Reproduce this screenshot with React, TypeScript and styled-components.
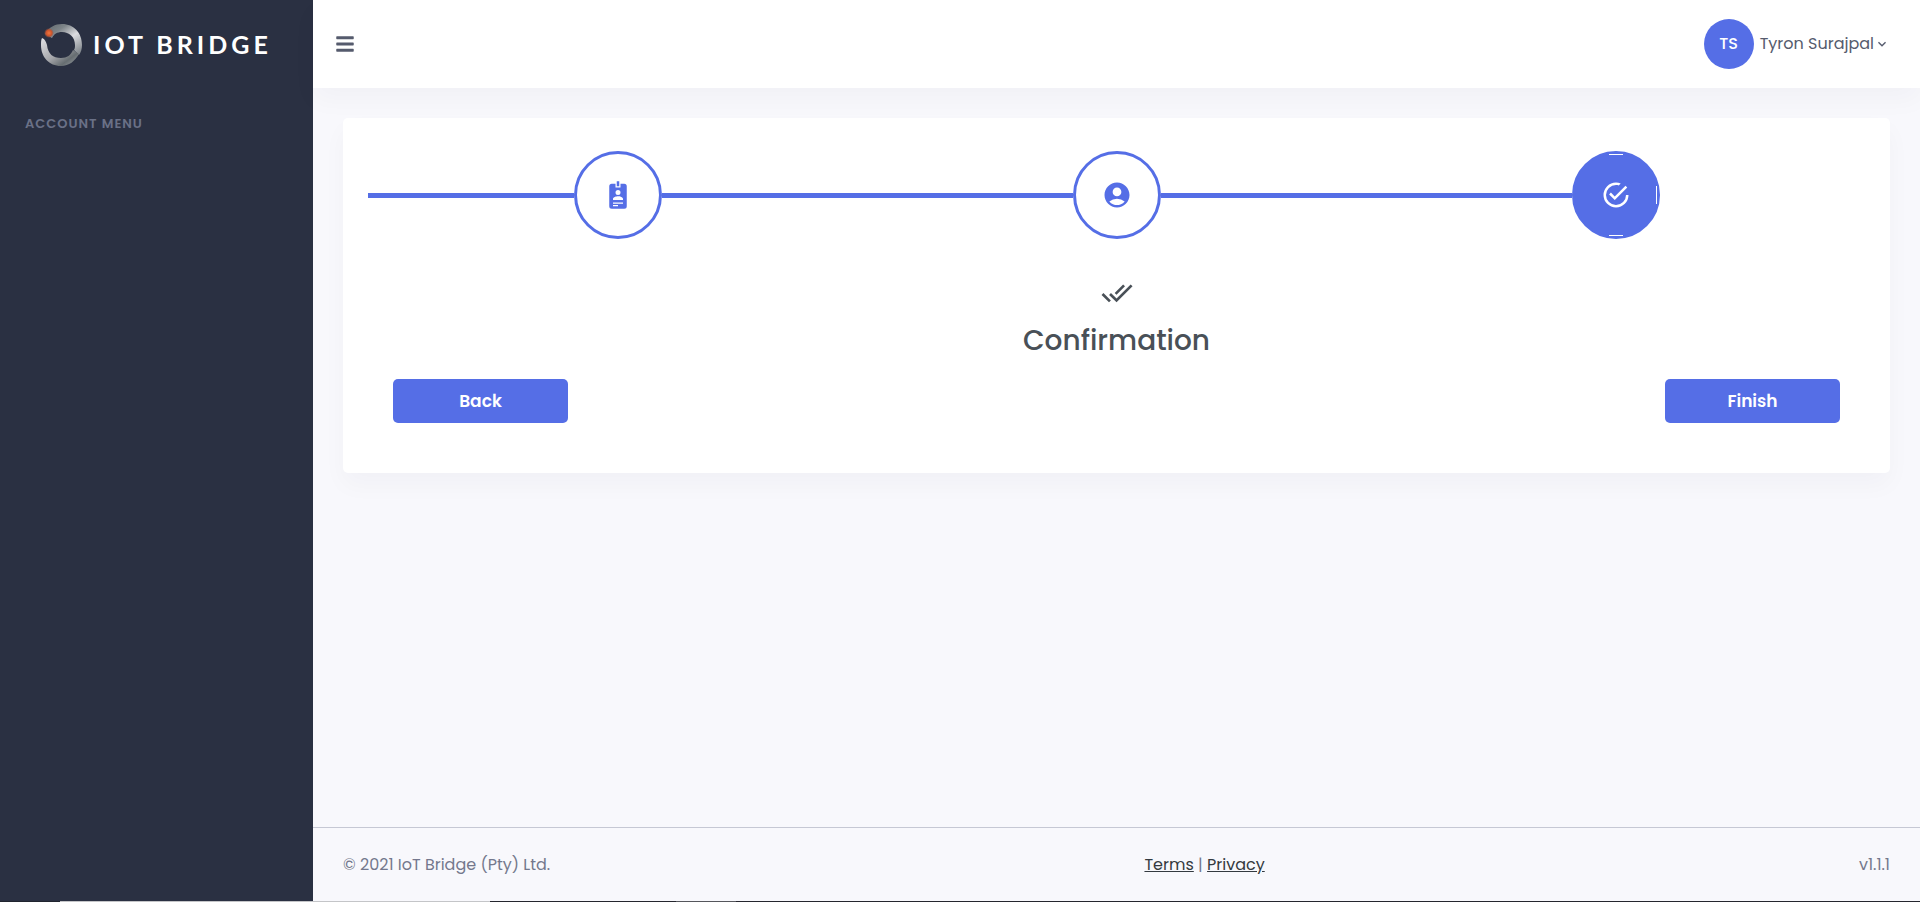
import React from "react";
import styled, { createGlobalStyle } from "styled-components";
import { FaBars } from "react-icons/fa";
import { MdAccountCircle, MdDoneAll, MdKeyboardArrowDown } from "react-icons/md";

const PRIMARY = "#556ee6";

const GlobalStyle = createGlobalStyle`
  *, *::before, *::after { box-sizing: border-box; }
  body {
    margin: 0;
    background: #f8f8fc;
    color: #74788d;
    font-family: Poppins, Inter, "Liberation Sans", sans-serif;
    font-size: 16px;
    line-height: 24px;
  }
  button { font: inherit; cursor: pointer; }
`;

const Page = styled.div`
  display: flex;
  flex-direction: column;
  min-height: 100vh;
`;

const Shell = styled.div`
  flex: 1;
  display: grid;
  grid-template-columns: 313px 1fr;
`;

const Sidebar = styled.aside`
  background: #2a3042;
`;

const Brand = styled.a`
  display: flex;
  align-items: center;
  gap: 9px;
  height: 88px;
  padding-left: 40px;
  color: #fff;
  font-family: Lato, sans-serif;
  font-size: 25px;
  font-weight: 700;
  letter-spacing: 4px;
  white-space: nowrap;
  text-decoration: none;
`;

const MenuTitle = styled.h2`
  margin: 24px 25px;
  color: #6a7187;
  font-size: 13px;
  font-weight: 600;
  line-height: 24px;
  letter-spacing: 1px;
`;

const Main = styled.div`
  display: flex;
  flex-direction: column;
  min-width: 0;
`;

const Topbar = styled.header`
  display: flex;
  align-items: center;
  justify-content: space-between;
  height: 88px;
  padding: 0 30px 0 22px;
  background: #fff;
  box-shadow: 0 12px 24px rgba(18, 38, 63, 0.03);
`;

const PlainButton = styled.button`
  display: flex;
  align-items: center;
  padding: 0;
  border: 0;
  background: none;
  color: #555b6d;
`;

const Avatar = styled.span`
  display: grid;
  place-items: center;
  width: 50px;
  height: 50px;
  margin-right: 6px;
  border-radius: 50%;
  background: ${PRIMARY};
  color: #fff;
  font-weight: 500;
`;

const Content = styled.main`
  flex: 1;
  padding: 30px;
`;

const Card = styled.section`
  padding: 33px 25px 50px;
  border-radius: 5px;
  background: #fff;
  box-shadow: 0 12px 24px rgba(18, 38, 63, 0.03);
`;

const Steps = styled.ol`
  display: grid;
  grid-template-columns: repeat(3, 1fr);
  margin: 0;
  padding: 0;
  list-style: none;
`;

const Step = styled.li<{ $last?: boolean }>`
  display: flex;
  align-items: center;
  &::before,
  &::after {
    content: "";
    flex: 1;
    height: 5px;
    background: ${PRIMARY};
  }
  &::after {
    visibility: ${(p) => (p.$last ? "hidden" : "visible")};
  }
`;

const StepButton = styled.button<{ $active?: boolean }>`
  display: grid;
  place-items: center;
  width: 88px;
  height: 88px;
  padding: 0;
  border: 3px solid ${PRIMARY};
  border-radius: 50%;
  background: ${(p) => (p.$active ? PRIMARY : "#fff")};
  color: ${(p) => (p.$active ? "#fff" : PRIMARY)};
`;

/* Faint highlights where the filled disc meets its ring. */
const Disc = styled.span`
  display: grid;
  place-items: center;
  width: 82px;
  height: 82px;
  background:
    linear-gradient(#fff, #fff) center top / 14px 1px no-repeat,
    linear-gradient(#fff, #fff) center bottom / 14px 1px no-repeat,
    linear-gradient(#fff, #fff) right center / 1px 18px no-repeat;
`;

const Panel = styled.div`
  display: flex;
  flex-direction: column;
  align-items: center;
  padding-top: 38px;
  color: #495057;
`;

const Title = styled.h1`
  margin: 12px 0 18px;
  font-size: 28px;
  font-weight: 500;
  line-height: 40px;
`;

const Actions = styled.div`
  display: flex;
  justify-content: space-between;
  padding: 0 25px;
`;

const ActionButton = styled.button`
  width: 175px;
  height: 44px;
  border: 0;
  border-radius: 5px;
  background: ${PRIMARY};
  color: #fff;
  font-size: 17px;
  font-weight: 600;
`;

const Footer = styled.footer`
  display: flex;
  align-items: center;
  justify-content: space-between;
  height: 74px;
  padding: 0 30px;
  border-top: 1px solid #c6c8d4;
`;

const FooterLink = styled.a`
  color: #343a40;
`;

const BottomEdge = styled.div`
  height: 1px;
  background: linear-gradient(
    to right,
    #20242f 60px,
    #c4c5c8 60px 490px,
    #25262e 490px 676px,
    #55565c 676px 736px,
    #25262e 736px
  );
`;

function Logo() {
  return (
    <svg width="44" height="46" viewBox="0 -2 44 46" aria-hidden="true">
      <defs>
        <linearGradient id="right" x1="0" y1="0" x2="0.8" y2="1">
          <stop offset="0" stopColor="#5f666b" />
          <stop offset="0.3" stopColor="#7d8488" />
          <stop offset="0.6" stopColor="#dcdce0" />
          <stop offset="1" stopColor="#858b90" />
        </linearGradient>
        <linearGradient id="left" x1="0" y1="0" x2="1" y2="1">
          <stop offset="0" stopColor="#e2e2e6" />
          <stop offset="0.5" stopColor="#a5a6aa" />
          <stop offset="0.75" stopColor="#666d71" />
          <stop offset="1" stopColor="#9fa5a8" />
        </linearGradient>
        <radialGradient id="spark">
          <stop offset="0" stopColor="#f0763f" />
          <stop offset="0.6" stopColor="#c9532c" />
          <stop offset="1" stopColor="#8b5144" stopOpacity="0" />
        </radialGradient>
      </defs>
      <path d="M5 11C9 4 15 1 22 1c12 0 20 9 20 21 0 4-1 7-3 10l-5-5c1-2 1-3 1-5 0-8-6-13-13-13-5 0-8 2-10 6z" fill="url(#right)" />
      <path d="M2 15c3 1 4 4 5 7 1 9 6 13 14 13 6 0 10-3 12-8l6 4c-4 7-10 12-18 12C9 43 1 34 1 22c0-3 0-5 1-7z" fill="url(#left)" />
      <circle cx="9" cy="10" r="5" fill="url(#spark)" />
    </svg>
  );
}

function StepIcon({ d }: { d: string }) {
  return (
    <svg width="30" height="30" viewBox="0 0 24 24" fill="currentColor" aria-hidden="true">
      <path d={d} />
    </svg>
  );
}

const BADGE =
  "M17,3H14V6H10V3H7A2,2 0 0,0 5,5V21A2,2 0 0,0 7,23H17A2,2 0 0,0 19,21V5A2,2 0 0,0 17,3M12,8A2,2 0 0,1 14,10A2,2 0 0,1 12,12A2,2 0 0,1 10,10A2,2 0 0,1 12,8M16,16H8V15C8,13.67 10.67,13 12,13C13.33,13 16,13.67 16,15V16M13,5H11V1H13V5M16,19H8V18H16V19M12,21H8V20H12V21Z";
const CHECK =
  "M20,12A8,8 0 0,1 12,20A8,8 0 0,1 4,12A8,8 0 0,1 12,4C12.76,4 13.5,4.11 14.2,4.31L15.77,2.74C14.61,2.26 13.34,2 12,2A10,10 0 0,0 2,12A10,10 0 0,0 12,22A10,10 0 0,0 22,12M7.91,10.08L6.5,11.5L11,16L21,6L19.59,4.58L11,13.17L7.91,10.08Z";

const steps = [
  { label: "Details", icon: <StepIcon d={BADGE} /> },
  { label: "Account", icon: <MdAccountCircle size={30} /> },
  { label: "Confirmation", icon: <StepIcon d={CHECK} />, active: true },
];

export default function App() {
  return (
    <>
      <GlobalStyle />
      <Page>
        <Shell>
          <Sidebar>
            <Brand href="#">
              <Logo />
              IOT BRIDGE
            </Brand>
            <MenuTitle>ACCOUNT MENU</MenuTitle>
          </Sidebar>
          <Main>
            <Topbar>
              <PlainButton type="button" aria-label="Toggle menu">
                <FaBars size={20} />
              </PlainButton>
              <PlainButton type="button">
                <Avatar>TS</Avatar>
                Tyron Surajpal
                <MdKeyboardArrowDown size={16} />
              </PlainButton>
            </Topbar>
            <Content>
              <Card>
                <Steps>
                  {steps.map((s) => (
                    <Step key={s.label} $last={s.active}>
                      <StepButton type="button" aria-label={s.label} $active={s.active}>
                        {s.active ? <Disc>{s.icon}</Disc> : s.icon}
                      </StepButton>
                    </Step>
                  ))}
                </Steps>
                <Panel>
                  <MdDoneAll size={32} />
                  <Title>Confirmation</Title>
                </Panel>
                <Actions>
                  <ActionButton type="button">Back</ActionButton>
                  <ActionButton type="button">Finish</ActionButton>
                </Actions>
              </Card>
            </Content>
            <Footer>
              <span>© 2021 IoT Bridge (Pty) Ltd.</span>
              <span>
                <FooterLink href="#terms">Terms</FooterLink> |{" "}
                <FooterLink href="#privacy">Privacy</FooterLink>
              </span>
              <span>v1.1.1</span>
            </Footer>
          </Main>
        </Shell>
        <BottomEdge />
      </Page>
    </>
  );
}
